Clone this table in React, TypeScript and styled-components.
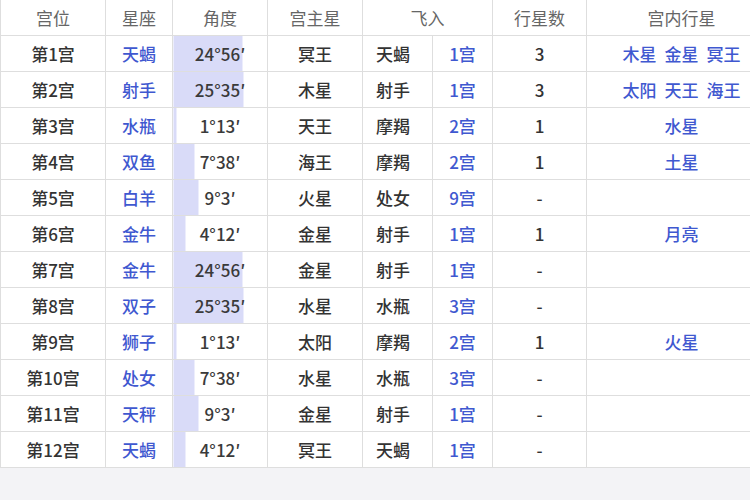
import React from 'react';
import styled, { createGlobalStyle } from 'styled-components';

type House = {
  name: string;
  sign: string;
  deg: number;
  min: number;
  ruler: string;
  flySign: string;
  flyHouse: string;
  count: string;
  planets: string[];
};

const houses: House[] = [
  { name: '第1宫', sign: '天蝎', deg: 24, min: 56, ruler: '冥王', flySign: '天蝎', flyHouse: '1宫', count: '3', planets: ['木星', '金星', '冥王'] },
  { name: '第2宫', sign: '射手', deg: 25, min: 35, ruler: '木星', flySign: '射手', flyHouse: '1宫', count: '3', planets: ['太阳', '天王', '海王'] },
  { name: '第3宫', sign: '水瓶', deg: 1, min: 13, ruler: '天王', flySign: '摩羯', flyHouse: '2宫', count: '1', planets: ['水星'] },
  { name: '第4宫', sign: '双鱼', deg: 7, min: 38, ruler: '海王', flySign: '摩羯', flyHouse: '2宫', count: '1', planets: ['土星'] },
  { name: '第5宫', sign: '白羊', deg: 9, min: 3, ruler: '火星', flySign: '处女', flyHouse: '9宫', count: '-', planets: [] },
  { name: '第6宫', sign: '金牛', deg: 4, min: 12, ruler: '金星', flySign: '射手', flyHouse: '1宫', count: '1', planets: ['月亮'] },
  { name: '第7宫', sign: '金牛', deg: 24, min: 56, ruler: '金星', flySign: '射手', flyHouse: '1宫', count: '-', planets: [] },
  { name: '第8宫', sign: '双子', deg: 25, min: 35, ruler: '水星', flySign: '水瓶', flyHouse: '3宫', count: '-', planets: [] },
  { name: '第9宫', sign: '狮子', deg: 1, min: 13, ruler: '太阳', flySign: '摩羯', flyHouse: '2宫', count: '1', planets: ['火星'] },
  { name: '第10宫', sign: '处女', deg: 7, min: 38, ruler: '水星', flySign: '水瓶', flyHouse: '3宫', count: '-', planets: [] },
  { name: '第11宫', sign: '天秤', deg: 9, min: 3, ruler: '金星', flySign: '射手', flyHouse: '1宫', count: '-', planets: [] },
  { name: '第12宫', sign: '天蝎', deg: 4, min: 12, ruler: '冥王', flySign: '天蝎', flyHouse: '1宫', count: '-', planets: [] },
];

const GlobalStyle = createGlobalStyle`
  html, body {
    margin: 0;
    padding: 0;
    background: #f3f3f6;
    overflow: hidden;
  }
  body {
    font-family: "Noto Sans CJK SC", "Noto Sans", sans-serif;
  }
`;

export default function App() {
  return (
    <>
      <GlobalStyle />
      <Page>
        <Table>
          <colgroup>
            <col style={{ width: 105 }} />
            <col style={{ width: 67 }} />
            <col style={{ width: 95 }} />
            <col style={{ width: 95 }} />
            <col style={{ width: 70 }} />
            <col style={{ width: 60 }} />
            <col style={{ width: 94 }} />
            <col style={{ width: 190 }} />
          </colgroup>
          <thead>
            <tr>
              <HeadCell>宫位</HeadCell>
              <HeadCell>星座</HeadCell>
              <HeadCell>角度</HeadCell>
              <HeadCell>宫主星</HeadCell>
              <HeadCell colSpan={2}>飞入</HeadCell>
              <HeadCell>行星数</HeadCell>
              <HeadCell>宫内行星</HeadCell>
            </tr>
          </thead>
          <tbody>
            {houses.map((h) => (
              <tr key={h.name}>
                <Cell>{h.name}</Cell>
                <Cell>
                  <Link>{h.sign}</Link>
                </Cell>
                <AngleCell $deg={h.deg + h.min / 60}>
                  {h.deg}°{h.min}′
                </AngleCell>
                <Cell>{h.ruler}</Cell>
                <FlyCell>{h.flySign}</FlyCell>
                <Cell>
                  <Link>{h.flyHouse}</Link>
                </Cell>
                <Cell>{h.count}</Cell>
                <PlanetCell>
                  {h.planets.map((p) => (
                    <Link key={p}>{p}</Link>
                  ))}
                </PlanetCell>
              </tr>
            ))}
          </tbody>
        </Table>
        <Footer />
      </Page>
    </>
  );
}

const Page = styled.div`
  width: 776px;
`;

const Table = styled.table`
  width: 776px;
  table-layout: fixed;
  border-collapse: collapse;
  background: #fff;
  margin-top: -1px;

  tr {
    height: 36px;
  }
`;

const HeadCell = styled.th`
  border: 1px solid #dedede;
  padding: 0;
  font-size: 17px;
  font-weight: 400;
  color: #666;
  text-align: center;
  vertical-align: middle;
`;

const Cell = styled.td`
  border: 1px solid #dedede;
  padding: 0;
  font-size: 17px;
  font-weight: 500;
  color: #333;
  text-align: center;
  vertical-align: middle;
  white-space: nowrap;
`;

const AngleCell = styled(Cell)<{ $deg: number }>`
  background: linear-gradient(
    to right,
    #d9dbf8 0,
    #d9dbf8 ${({ $deg }) => Math.round($deg * 2.75)}px,
    #fff ${({ $deg }) => Math.round($deg * 2.75)}px
  );
  color: #3a3a3a;
`;

const FlyCell = styled(Cell)`
  text-align: left;
  padding-left: 13px;
`;

const PlanetCell = styled(Cell)`
  word-spacing: 0;

  & > span + span {
    margin-left: 8px;
  }
`;

const Link = styled.span`
  color: #3f58d0;
`;

const Footer = styled.div`
  height: 40px;
  background: #f3f3f6;
`;
